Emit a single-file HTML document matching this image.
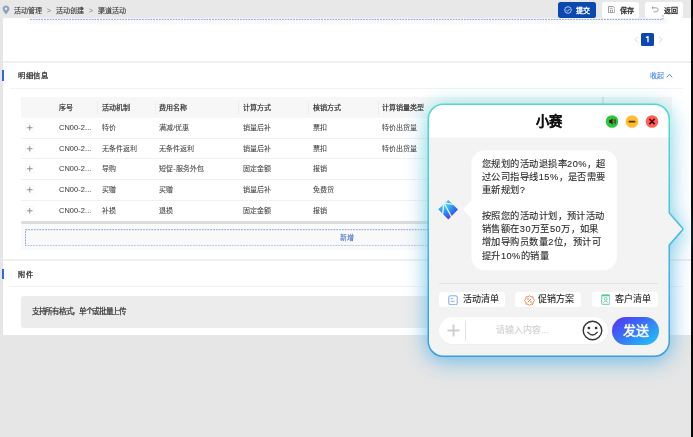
<!DOCTYPE html>
<html lang="zh-CN"><head><meta charset="utf-8">
<style>
*{margin:0;padding:0;box-sizing:border-box}
html,body{width:693px;height:437px;overflow:hidden}
body{background:#e6e6e6;font-family:"Liberation Sans",sans-serif;position:relative;color:#333}
.a{position:absolute}
.t{position:absolute;white-space:nowrap;line-height:1;will-change:transform;-webkit-text-stroke:0.1px currentColor}
#rline{left:691.4px;top:0;width:1.6px;height:437px;background:#0a0a0a}
#topbar{left:0;top:0;width:691px;height:18px;background:#e8e8e8}
#panel{left:3px;top:17.7px;width:688px;height:317px;background:#fff}
.band{position:absolute;left:3px;width:688px;height:2px;background:#efefef}
.bar{position:absolute;left:2px;width:2px;background:#2f6bd8}
.hd{font-size:7.25px;letter-spacing:0.5px;-webkit-text-stroke:0.22px #222;color:#222}
.div{position:absolute;height:1px;background:#f2f2f2}
.btn{position:absolute;top:1.5px;height:16.3px;border-radius:2.5px;background:#fff}
.th{font-size:7px;letter-spacing:0.1px;-webkit-text-stroke:0.22px #333;color:#333}
.td{font-size:7px;letter-spacing:0.1px;color:#3d3d3d;-webkit-text-stroke:0.05px #3d3d3d}
.rowline{position:absolute;left:21px;width:651px;height:1px;background:#f1f1f1}
.bub{font-size:9.25px;letter-spacing:0.45px;color:#2a2a2a}
.chip{top:292.3px;height:15px;background:#fff;border-radius:3px}
.chipt{top:295.2px;font-size:9px;color:#222}
.plus{position:absolute;left:25.2px;width:9.5px;height:9.5px}
</style></head><body>
<div id="topbar" class="a"></div>
<div id="panel" class="a"></div>
<div id="rline" class="a"></div>

<!-- breadcrumb -->
<svg class="a" style="left:2px;top:5px" width="8" height="10" viewBox="0 0 8 10"><path d="M4 0.5C2 0.5 0.6 2 0.6 3.8C0.6 6 4 9.5 4 9.5S7.4 6 7.4 3.8C7.4 2 6 0.5 4 0.5Z" fill="#8ea3bd"/><circle cx="4" cy="3.8" r="1.3" fill="#e8e8e8"/></svg>
<div class="t" style="left:14px;top:6.5px;font-size:7px;color:#333">活动管理</div>
<div class="t" style="left:47px;top:6.5px;font-size:7px;color:#888">&gt;</div>
<div class="t" style="left:56px;top:6.5px;font-size:7px;color:#333">活动创建</div>
<div class="t" style="left:89px;top:6.5px;font-size:7px;color:#888">&gt;</div>
<div class="t" style="left:98px;top:6.5px;font-size:7px;color:#333">渠道活动</div>

<!-- top buttons -->
<div class="btn" style="left:558px;width:38px;background:#0b49b0"></div>
<svg class="a" style="left:564px;top:5.5px" width="8" height="8" viewBox="0 0 8 8"><circle cx="4" cy="4" r="3.3" fill="none" stroke="#fff" stroke-width="0.7"/><path d="M2.4 4.1L3.6 5.2L5.6 3" fill="none" stroke="#fff" stroke-width="0.7"/></svg>
<div class="t" style="left:576px;top:6.6px;font-size:7px;letter-spacing:0.2px;-webkit-text-stroke:0.3px #fff;color:#fff">提交</div>
<div class="btn" style="left:602px;width:37px"></div>
<svg class="a" style="left:607.7px;top:5.8px" width="7.4" height="7.4" viewBox="0 0 7.4 7.4"><path d="M0.5 0.5H5.2L6.9 2.2V6.9H0.5Z" fill="none" stroke="#8a8a8a" stroke-width="0.85"/><path d="M1.8 2.3H4.6" stroke="#8a8a8a" stroke-width="0.8"/><rect x="2.4" y="4.2" width="2.4" height="2.4" fill="none" stroke="#8a8a8a" stroke-width="0.7"/></svg>
<div class="t" style="left:620px;top:6.6px;font-size:7px;letter-spacing:0.2px;-webkit-text-stroke:0.3px #333;color:#333">保存</div>
<div class="btn" style="left:645px;width:38px"></div>
<svg class="a" style="left:651px;top:5.5px" width="8" height="7" viewBox="0 0 8 7"><path d="M1 1.8H5.2A2 2 0 0 1 5.2 5.8H2.5" fill="none" stroke="#666" stroke-width="0.6"/><path d="M2.3 0.6L1 1.8L2.3 3" fill="none" stroke="#666" stroke-width="0.6"/></svg>
<div class="t" style="left:663.5px;top:6.6px;font-size:7px;letter-spacing:0.2px;-webkit-text-stroke:0.3px #333;color:#333">返回</div>

<!-- leftover dashed box bottom -->
<div class="a" style="left:27px;top:18px;width:640px;height:6px;background:#f9f9f9"></div>
<svg class="a" style="left:29px;top:14px" width="636" height="8" viewBox="0 0 636 8"><path d="M1 5.4H634V0" fill="none" stroke="#7a9ad8" stroke-width="0.9" stroke-dasharray="1.8 1"/></svg>

<!-- pagination -->
<svg class="a" style="left:633.5px;top:36px" width="5" height="7" viewBox="0 0 5 7"><path d="M3.8 0.8L1 3.6L3.8 6.4" fill="none" stroke="#cfcfcf" stroke-width="0.9"/></svg>
<div class="a" style="left:641px;top:33px;width:13px;height:13px;background:#0b49b0;border-radius:1.5px"></div>
<svg class="a" style="left:641px;top:33px" width="13" height="13" viewBox="0 0 13 13"><path d="M5 4.6L7 3.5V9.3" fill="none" stroke="#fff" stroke-width="1.3" stroke-linejoin="round"/></svg>
<svg class="a" style="left:657.5px;top:36px" width="5" height="7" viewBox="0 0 5 7"><path d="M1.2 0.8L4 3.6L1.2 6.4" fill="none" stroke="#cfcfcf" stroke-width="0.9"/></svg>

<div class="band" style="top:61px"></div>
<!-- section 明细信息 -->
<div class="bar" style="top:70px;height:11px"></div>
<div class="t hd" style="left:18px;top:71.8px">明细信息</div>
<div class="t" style="left:649.5px;top:72px;font-size:7px;color:#3a7ef0">收起</div><svg class="a" style="left:665.5px;top:73px" width="7" height="5" viewBox="0 0 7 5"><path d="M0.8 4.3L3.5 1.2L6.2 4.3" fill="none" stroke="#3a7ef0" stroke-width="0.9"/></svg>
<div class="div" style="left:10px;top:88px;width:673px"></div>

<!-- table -->
<div class="a" style="left:21px;top:97px;width:651px;height:21px;background:#f7f7f7"></div>
<div class="t th" style="left:59px;top:104px">序号</div>
<div class="t th" style="left:101.8px;top:104px">活动机制</div>
<div class="t th" style="left:159.3px;top:104px">费用名称</div>
<div class="t th" style="left:242.8px;top:104px">计算方式</div>
<div class="t th" style="left:312.8px;top:104px">核销方式</div>
<div class="t th" style="left:382.3px;top:104px">计算销量类型</div>
<div class="a" style="left:97px;top:101px;width:1px;height:13px;background:#ececec"></div>
<div class="a" style="left:155px;top:101px;width:1px;height:13px;background:#ececec"></div>
<div class="a" style="left:238px;top:101px;width:1px;height:13px;background:#ececec"></div>
<div class="a" style="left:308px;top:101px;width:1px;height:13px;background:#ececec"></div>
<div class="a" style="left:378px;top:101px;width:1px;height:13px;background:#ececec"></div>
<svg class="plus" style="top:123.25px" viewBox="0 0 9.5 9.5"><rect x="0.4" y="0.4" width="8.7" height="8.7" rx="1.2" fill="none" stroke="#f0f0f0" stroke-width="0.6"/><path d="M1.9 4.75H7.6M4.75 1.9V7.6" stroke="#808080" stroke-width="0.85"/></svg>
<div class="t td" style="left:59px;top:124.4px"><span style="font-size:7.4px">CN00-2...</span></div>
<div class="t td" style="left:101.8px;top:124.4px">特价</div>
<div class="t td" style="left:159.3px;top:124.4px">满减/优惠</div>
<div class="t td" style="left:242.8px;top:124.4px">销量后补</div>
<div class="t td" style="left:312.8px;top:124.4px">票扣</div>
<div class="t td" style="left:382.3px;top:124.4px">特价出货量</div>
<svg class="plus" style="top:143.75px" viewBox="0 0 9.5 9.5"><rect x="0.4" y="0.4" width="8.7" height="8.7" rx="1.2" fill="none" stroke="#f0f0f0" stroke-width="0.6"/><path d="M1.9 4.75H7.6M4.75 1.9V7.6" stroke="#808080" stroke-width="0.85"/></svg>
<div class="t td" style="left:59px;top:144.9px"><span style="font-size:7.4px">CN00-2...</span></div>
<div class="t td" style="left:101.8px;top:144.9px">无条件返利</div>
<div class="t td" style="left:159.3px;top:144.9px">无条件返利</div>
<div class="t td" style="left:242.8px;top:144.9px">销量后补</div>
<div class="t td" style="left:312.8px;top:144.9px">票扣</div>
<div class="t td" style="left:382.3px;top:144.9px">特价出货量</div>
<svg class="plus" style="top:164.25px" viewBox="0 0 9.5 9.5"><rect x="0.4" y="0.4" width="8.7" height="8.7" rx="1.2" fill="none" stroke="#f0f0f0" stroke-width="0.6"/><path d="M1.9 4.75H7.6M4.75 1.9V7.6" stroke="#808080" stroke-width="0.85"/></svg>
<div class="t td" style="left:59px;top:165.4px"><span style="font-size:7.4px">CN00-2...</span></div>
<div class="t td" style="left:101.8px;top:165.4px">导购</div>
<div class="t td" style="left:159.3px;top:165.4px">短促-服务外包</div>
<div class="t td" style="left:242.8px;top:165.4px">固定金额</div>
<div class="t td" style="left:312.8px;top:165.4px">报销</div>
<svg class="plus" style="top:184.75px" viewBox="0 0 9.5 9.5"><rect x="0.4" y="0.4" width="8.7" height="8.7" rx="1.2" fill="none" stroke="#f0f0f0" stroke-width="0.6"/><path d="M1.9 4.75H7.6M4.75 1.9V7.6" stroke="#808080" stroke-width="0.85"/></svg>
<div class="t td" style="left:59px;top:185.9px"><span style="font-size:7.4px">CN00-2...</span></div>
<div class="t td" style="left:101.8px;top:185.9px">买赠</div>
<div class="t td" style="left:159.3px;top:185.9px">买赠</div>
<div class="t td" style="left:242.8px;top:185.9px">销量后补</div>
<div class="t td" style="left:312.8px;top:185.9px">免费货</div>
<svg class="plus" style="top:205.75px" viewBox="0 0 9.5 9.5"><rect x="0.4" y="0.4" width="8.7" height="8.7" rx="1.2" fill="none" stroke="#f0f0f0" stroke-width="0.6"/><path d="M1.9 4.75H7.6M4.75 1.9V7.6" stroke="#808080" stroke-width="0.85"/></svg>
<div class="t td" style="left:59px;top:206.9px"><span style="font-size:7.4px">CN00-2...</span></div>
<div class="t td" style="left:101.8px;top:206.9px">补损</div>
<div class="t td" style="left:159.3px;top:206.9px">退损</div>
<div class="t td" style="left:242.8px;top:206.9px">固定金额</div>
<div class="t td" style="left:312.8px;top:206.9px">报销</div>
<div class="rowline" style="top:138px"></div>
<div class="rowline" style="top:158px"></div>
<div class="rowline" style="top:179px"></div>
<div class="rowline" style="top:200px"></div>
<div class="a" style="left:602px;top:97px;width:1.5px;height:10px;background:#e0e0e0"></div>
<div class="a" style="left:21px;top:224px;width:651px;height:26px;background:#fafafa"></div>
<div class="a" style="left:21px;top:220.8px;width:651px;height:3.6px;border-radius:2px;background:#dcdcdc"></div>
<div class="a" style="left:25px;top:228.5px;width:643px;height:17.5px;background:#f9f9f9"></div><svg class="a" style="left:25px;top:228.5px" width="643" height="17.5" viewBox="0 0 643 17.5"><rect x="0.5" y="0.7" width="642" height="16.2" fill="none" stroke="#7a9ad8" stroke-width="0.9" stroke-dasharray="1.8 1"/></svg>
<div class="t" style="left:340px;top:234.3px;font-size:7px;letter-spacing:0.1px;color:#4a72c8">新增</div>
<div class="band" style="top:259px"></div>
<!-- section 附件 -->
<div class="bar" style="top:268.5px;height:10.5px"></div>
<div class="t hd" style="left:18px;top:270.8px">附件</div>
<div class="div" style="left:9px;top:286px;width:674px"></div>
<div class="a" style="left:21px;top:295.5px;width:645px;height:32.5px;background:#ececec;border-radius:3px"></div>
<div class="t" style="left:32px;top:308px;font-size:7.5px;letter-spacing:-0.3px;-webkit-text-stroke:0.22px #333;color:#333">支持所有格式，单个或批量上传</div>


<!-- chat window -->
<svg class="a" style="left:390px;top:80px" width="303" height="357" viewBox="0 0 303 357">
<defs>
<linearGradient id="bg" x1="0" y1="0" x2="0" y2="1"><stop offset="0" stop-color="#52d8d0"/><stop offset="0.3" stop-color="#4fd0d6"/><stop offset="0.55" stop-color="#48b6e2"/><stop offset="1" stop-color="#3a9de2"/></linearGradient>
<filter id="gl" x="-40%" y="-40%" width="180%" height="180%"><feGaussianBlur stdDeviation="9.5"/></filter>
<filter id="gl2" x="-50%" y="-50%" width="200%" height="200%"><feGaussianBlur stdDeviation="13"/></filter>
<linearGradient id="gg" x1="0" y1="0" x2="0" y2="1"><stop offset="0" stop-color="#7fe0e0"/><stop offset="1" stop-color="#5ab4e6"/></linearGradient>
<clipPath id="cp"><path d="M53.25,24.25 H264.25 A15,15 0 0 1 279.25,39.25 V133 L291.20,146.60 Q294.60,149.00 291.20,151.40 L279.25,165.00 V261.25 A15,15 0 0 1 264.25,276.25 H53.25 A15,15 0 0 1 38.25,261.25 V39.25 A15,15 0 0 1 53.25,24.25 Z"/></clipPath>
</defs>
<path d="M53.25,24.25 H264.25 A15,15 0 0 1 279.25,39.25 V133 L291.20,146.60 Q294.60,149.00 291.20,151.40 L279.25,165.00 V261.25 A15,15 0 0 1 264.25,276.25 H53.25 A15,15 0 0 1 38.25,261.25 V39.25 A15,15 0 0 1 53.25,24.25 Z" fill="#6ab8e8" opacity="0.45" filter="url(#gl2)" transform="translate(0,6)"/>
<path d="M53.25,24.25 H264.25 A15,15 0 0 1 279.25,39.25 V133 L291.20,146.60 Q294.60,149.00 291.20,151.40 L279.25,165.00 V261.25 A15,15 0 0 1 264.25,276.25 H53.25 A15,15 0 0 1 38.25,261.25 V39.25 A15,15 0 0 1 53.25,24.25 Z" fill="url(#gg)" opacity="0.75" filter="url(#gl)" transform="translate(0,2)"/>
<path d="M53.25,24.25 H264.25 A15,15 0 0 1 279.25,39.25 V133 L291.20,146.60 Q294.60,149.00 291.20,151.40 L279.25,165.00 V261.25 A15,15 0 0 1 264.25,276.25 H53.25 A15,15 0 0 1 38.25,261.25 V39.25 A15,15 0 0 1 53.25,24.25 Z" fill="#f3f3f3"/>
<rect x="38.25" y="24.25" width="241.0" height="33.25" fill="#fff" clip-path="url(#cp)"/>
<path d="M53.25,24.25 H264.25 A15,15 0 0 1 279.25,39.25 V133 L291.20,146.60 Q294.60,149.00 291.20,151.40 L279.25,165.00 V261.25 A15,15 0 0 1 264.25,276.25 H53.25 A15,15 0 0 1 38.25,261.25 V39.25 A15,15 0 0 1 53.25,24.25 Z" fill="none" stroke="url(#bg)" stroke-width="1.5"/>
</svg>
<div class="t" style="left:536px;top:114.5px;font-size:13.25px;letter-spacing:0.25px;font-weight:bold;-webkit-text-stroke:0.15px #111;color:#111">小赛</div>
<svg class="a" style="left:599px;top:108px" width="60" height="27" viewBox="0 0 60 27">
<circle cx="13" cy="13.5" r="6.3" fill="#27c93f"/>
<path d="M10.2 12H11.6L13.6 10.3V16.7L11.6 15H10.2Z" fill="#5c0a0a"/><path d="M14.8 11.7Q15.8 13.5 14.8 15.3M15.9 10.8Q17.4 13.5 15.9 16.2" fill="none" stroke="#5c0a0a" stroke-width="0.7"/>
<circle cx="33" cy="13.5" r="6.3" fill="#ffbd2e"/>
<rect x="29.6" y="12.7" width="6.8" height="1.8" rx="0.5" fill="#5a2a00"/>
<circle cx="53" cy="13.5" r="6.3" fill="#ff5f57"/>
<path d="M50.4 10.9L55.6 16.1M55.6 10.9L50.4 16.1" stroke="#4a0606" stroke-width="1.6"/>
</svg>
<!-- logo -->
<svg class="a" style="left:438px;top:199px" width="21" height="21" viewBox="0 0 21 21">
<defs><radialGradient id="lg" gradientUnits="userSpaceOnUse" cx="6" cy="4" r="19"><stop offset="0" stop-color="#5ee4fb"/><stop offset="0.3" stop-color="#35b8f6"/><stop offset="0.65" stop-color="#2f6ef0"/><stop offset="1" stop-color="#5a2ae6"/></radialGradient></defs>
<path d="M10.3 0.9L20 10.6L10.3 20.6L0.3 10.3Z" fill="url(#lg)"/>
<path d="M6.4 4.8L13.8 18.4M5.6 5.6L4.7 15.2M6.8 4.2L15.4 5.4" stroke="#f3f3f3" stroke-width="1.25" fill="none"/><circle cx="6.2" cy="4.6" r="1" fill="#f3f3f3" opacity="0.8"/>
</svg>
<!-- bubble -->
<svg class="a" style="left:461px;top:149.5px" width="157" height="121" viewBox="0 0 157 121">
<rect x="10.5" y="0.3" width="145.3" height="120" rx="13" fill="#fff"/>
<path d="M11 50L1.8 59.6L11 69Z" fill="#fff"/>
</svg>
<div class="t bub" style="left:481.5px;top:159.8px">您规划的活动退损率20%，超</div>
<div class="t bub" style="left:481.5px;top:172.9px">过公司指导线15%，是否需要</div>
<div class="t bub" style="left:481.5px;top:186.0px">重新规划?</div>
<div class="t bub" style="left:481.5px;top:212.2px">按照您的活动计划，预计活动</div>
<div class="t bub" style="left:481.5px;top:225.3px">销售额在30万至50万，如果</div>
<div class="t bub" style="left:481.5px;top:238.4px">增加导购员数量2位，预计可</div>
<div class="t bub" style="left:481.5px;top:251.5px">提升10%的销量</div>

<!-- chips -->
<div class="a" style="left:438.5px;top:283px;width:219px;height:1px;background:#e3e3e3"></div>
<div class="a chip" style="left:439px;width:66px"></div>
<div class="a chip" style="left:515.3px;width:65.7px"></div>
<div class="a chip" style="left:592px;width:65.5px"></div>
<svg class="a" style="left:447.5px;top:294.8px" width="10" height="10.5" viewBox="0 0 10 10.5"><rect x="0.8" y="0.8" width="8.4" height="8.9" rx="1.4" fill="#fff" stroke="#6a9cf5" stroke-width="0.9"/><path d="M2.6 3.7H5M2.6 6.4H6.6" stroke="#6a9cf5" stroke-width="0.8"/></svg>
<div class="t chipt" style="left:462.8px">活动清单</div>
<svg class="a" style="left:524px;top:294.5px" width="11" height="11" viewBox="0 0 11 11"><path d="M5.5 0.6L7 1.9L9 1.8L9.2 3.8L10.5 5.5L9.2 7.2L9 9.2L7 9.1L5.5 10.4L4 9.1L2 9.2L1.8 7.2L0.5 5.5L1.8 3.8L2 1.8L4 1.9Z" fill="#fff" stroke="#f08040" stroke-width="0.9"/><path d="M3.8 7.2L7.2 3.8" stroke="#f07b3a" stroke-width="0.8"/><circle cx="4" cy="4" r="0.8" fill="#f07b3a"/><circle cx="7" cy="7" r="0.8" fill="#f07b3a"/></svg>
<div class="t chipt" style="left:538px">促销方案</div>
<svg class="a" style="left:600.8px;top:294.3px" width="9.5" height="11" viewBox="0 0 9.5 11"><rect x="0.7" y="0.9" width="8.1" height="9.4" rx="0.8" fill="#fff" stroke="#58cc98" stroke-width="0.95"/><path d="M0.7 1.6H8.8" stroke="#58cc98" stroke-width="1.4"/><circle cx="4.75" cy="4.9" r="1.4" fill="none" stroke="#58cc98" stroke-width="0.85"/><path d="M2.4 8.8Q4.75 5.6 7.1 8.8" fill="none" stroke="#58cc98" stroke-width="0.85"/></svg>
<div class="t chipt" style="left:614.7px">客户清单</div>
<!-- input -->
<div class="a" style="left:438.5px;top:316.7px;width:169.5px;height:27.5px;border-radius:14px;background:#fff;box-shadow:0 0.5px 2px rgba(0,0,0,0.04)"></div>
<svg class="a" style="left:446px;top:323px" width="15" height="15" viewBox="0 0 15 15"><path d="M7.5 1.5V13.5M1.5 7.5H13.5" stroke="#cfcfcf" stroke-width="2"/></svg>
<div class="a" style="left:465px;top:320.5px;width:1px;height:20.5px;background:#e2e2e2"></div>
<div class="t" style="left:496px;top:325.5px;font-size:9px;color:#d0d0d0">请输入内容...</div>
<svg class="a" style="left:582px;top:320px" width="21" height="21" viewBox="0 0 21 21"><circle cx="10.5" cy="10.5" r="9.3" fill="none" stroke="#333" stroke-width="1.4"/><circle cx="6.9" cy="8" r="1.35" fill="#333"/><circle cx="14.1" cy="8" r="1.35" fill="#333"/><path d="M5.4 11.9Q10.5 18 15.6 11.9" fill="none" stroke="#333" stroke-width="1.4"/></svg>
<div class="a" style="left:612px;top:316.6px;width:46.5px;height:28px;border-radius:14px;background:linear-gradient(145deg,#5a2ff2 0%,#3f62f4 35%,#2b9cf8 70%,#22c8f8 100%)"></div>
<div class="t" style="left:622.5px;top:323.5px;font-size:13px;-webkit-text-stroke:0.45px #fff;color:#fff">发送</div>
</body></html>
